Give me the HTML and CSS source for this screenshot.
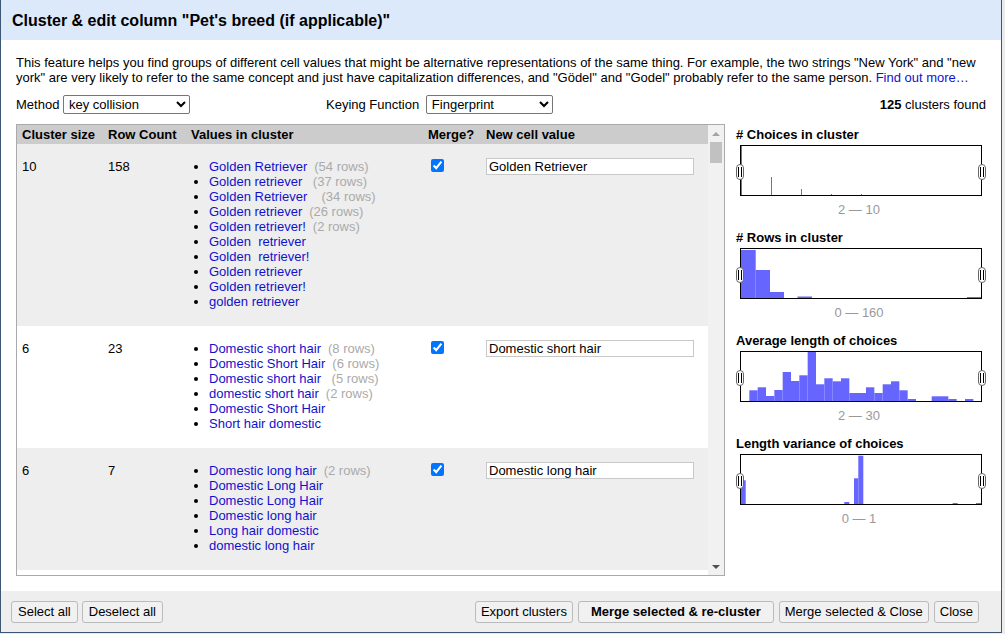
FILE: index.html
```html
<!DOCTYPE html>
<html lang="en">
<head>
<meta charset="utf-8">
<title>Cluster &amp; edit column</title>
<link rel="stylesheet" href="styles.css">
</head>
<body>
<div class="dialog">
  <div class="dlg-header">
    <h1 class="dlg-title">Cluster &amp; edit column "Pet's breed (if applicable)"</h1>
  </div>
  <div class="dlg-body">
    <p class="intro">This feature helps you find groups of different cell values that might be alternative representations of the same thing. For example, the two strings "New York" and "new york" are very likely to refer to the same concept and just have capitalization differences, and "Gödel" and "Godel" probably refer to the same person. <a class="link" href="#">Find out more…</a></p>
    <div class="controls">
      <div class="ctl">Method <select class="sel"><option>key collision</option><option>nearest neighbor</option></select></div>
      <div class="ctl">Keying Function <select class="sel sel-key"><option>Fingerprint</option><option>ngram-fingerprint</option></select></div>
      <div class="ctl count"><b>125</b>&nbsp;clusters found</div>
    </div>
    <div class="main">
      <div class="table-wrap">
        <div class="table-scroll">
          <table class="clusters">
            <colgroup><col class="c1"><col class="c2"><col class="c3"><col class="c4"><col class="c5"></colgroup>
            <thead>
              <tr><th>Cluster size</th><th>Row Count</th><th>Values in cluster</th><th>Merge?</th><th>New cell value</th></tr>
            </thead>
            <tbody>
              <tr class="odd">
                <td>10</td><td>158</td>
                <td><ul class="vals">
                  <li><a class="v" href="#">Golden Retriever</a><span class="rc">(54 rows)</span></li>
                  <li><a class="v" href="#">Golden retriever </a><span class="rc">(37 rows)</span></li>
                  <li><a class="v" href="#">Golden Retriever  </a><span class="rc">(34 rows)</span></li>
                  <li><a class="v" href="#">Golden retriever</a><span class="rc">(26 rows)</span></li>
                  <li><a class="v" href="#">Golden retriever!</a><span class="rc">(2 rows)</span></li>
                  <li><a class="v" href="#">Golden  retriever</a></li>
                  <li><a class="v" href="#">Golden  retriever!</a></li>
                  <li><a class="v" href="#">Golden retriever</a></li>
                  <li><a class="v" href="#">Golden retriever!</a></li>
                  <li><a class="v" href="#">golden retriever</a></li>
                </ul></td>
                <td><input class="cb" type="checkbox" checked></td>
                <td><input class="nv" type="text" value="Golden Retriever"></td>
              </tr>
              <tr class="even">
                <td>6</td><td>23</td>
                <td><ul class="vals">
                  <li><a class="v" href="#">Domestic short hair</a><span class="rc">(8 rows)</span></li>
                  <li><a class="v" href="#">Domestic Short Hair</a><span class="rc">(6 rows)</span></li>
                  <li><a class="v" href="#">Domestic short hair </a><span class="rc">(5 rows)</span></li>
                  <li><a class="v" href="#">domestic short hair</a><span class="rc">(2 rows)</span></li>
                  <li><a class="v" href="#">Domestic Short Hair</a></li>
                  <li><a class="v" href="#">Short hair domestic</a></li>
                </ul></td>
                <td><input class="cb" type="checkbox" checked></td>
                <td><input class="nv" type="text" value="Domestic short hair"></td>
              </tr>
              <tr class="odd">
                <td>6</td><td>7</td>
                <td><ul class="vals">
                  <li><a class="v" href="#">Domestic long hair</a><span class="rc">(2 rows)</span></li>
                  <li><a class="v" href="#">Domestic Long Hair</a></li>
                  <li><a class="v" href="#">Domestic Long Hair</a></li>
                  <li><a class="v" href="#">Domestic long hair</a></li>
                  <li><a class="v" href="#">Long hair domestic</a></li>
                  <li><a class="v" href="#">domestic long hair</a></li>
                </ul></td>
                <td><input class="cb" type="checkbox" checked></td>
                <td><input class="nv" type="text" value="Domestic long hair"></td>
              </tr>
              <tr class="even">
                <td>5</td><td>12</td>
                <td><ul class="vals">
                  <li><a class="v" href="#">Labrador Retriever</a><span class="rc">(6 rows)</span></li>
                  <li><a class="v" href="#">Labrador retriever</a></li>
                </ul></td>
                <td><input class="cb" type="checkbox" checked></td>
                <td><input class="nv" type="text" value="Labrador Retriever"></td>
              </tr>
            </tbody>
          </table>
        </div>
        <div class="vscroll">
          <div class="sb-btn"><span class="arr-up"></span></div>
          <div class="sb-thumb"></div>
          <div class="sb-track"></div>
          <div class="sb-btn"><span class="arr-down"></span></div>
        </div>
      </div>
      <div class="facets">
        <div class="facet">
          <div class="facet-title"># Choices in cluster</div>
          <div class="hist">
            <svg class="bars" width="240" height="49" viewBox="0 0 240 49">
              <rect x="0" y="0" width="1" height="49"/>
              <rect x="30" y="31" width="1" height="18"/>
              <rect x="60" y="43" width="1" height="6"/>
              <rect x="90" y="48" width="1" height="1"/>
              <rect x="120" y="48" width="1" height="1"/>
            </svg>
            <span class="handle left"><span class="grip"></span></span>
            <span class="handle right"><span class="grip"></span></span>
          </div>
          <div class="range">2 — 10</div>
        </div>
        <div class="facet">
          <div class="facet-title"># Rows in cluster</div>
          <div class="hist">
            <svg class="bars" width="240" height="49" viewBox="0 0 240 49">
              <rect x="0" y="1" width="14.7" height="48"/>
              <rect x="14.7" y="21" width="14.3" height="28"/>
              <rect x="29" y="43" width="14" height="6"/>
              <rect x="56.5" y="47.5" width="14.5" height="1.5"/>
              <rect x="226" y="48" width="14" height="1"/>
            </svg>
            <span class="handle left"><span class="grip"></span></span>
            <span class="handle right"><span class="grip"></span></span>
          </div>
          <div class="range">0 — 160</div>
        </div>
        <div class="facet">
          <div class="facet-title">Average length of choices</div>
          <div class="hist">
            <svg class="bars" width="240" height="49" viewBox="0 0 240 49">
              <rect x="8.33" y="38.3" width="8.34" height="10.7"/>
              <rect x="16.67" y="35.3" width="8.33" height="13.7"/>
              <rect x="25" y="44" width="8.33" height="5"/>
              <rect x="33.33" y="38" width="8.34" height="11"/>
              <rect x="41.67" y="20" width="8.33" height="29"/>
              <rect x="50" y="29" width="8.33" height="20"/>
              <rect x="58.33" y="23.3" width="8.34" height="25.7"/>
              <rect x="66.67" y="0" width="8.33" height="49"/>
              <rect x="75" y="32.3" width="8.33" height="16.7"/>
              <rect x="83.33" y="26.3" width="8.34" height="22.7"/>
              <rect x="91.67" y="29.3" width="8.33" height="19.7"/>
              <rect x="100" y="26.3" width="8.33" height="22.7"/>
              <rect x="108.33" y="41" width="16.67" height="8"/>
              <rect x="125" y="35.3" width="8.33" height="13.7"/>
              <rect x="133.33" y="41" width="8.34" height="8"/>
              <rect x="141.67" y="32.3" width="8.33" height="16.7"/>
              <rect x="150" y="29.3" width="8.33" height="19.7"/>
              <rect x="158.33" y="38.3" width="8.34" height="10.7"/>
              <rect x="166.67" y="47" width="8.33" height="2"/>
              <rect x="190.67" y="44.3" width="16.67" height="4.7"/>
              <rect x="207.33" y="47" width="8.34" height="2"/>
              <rect x="224" y="47" width="8.33" height="2"/>
            </svg>
            <span class="handle left"><span class="grip"></span></span>
            <span class="handle right"><span class="grip"></span></span>
          </div>
          <div class="range">2 — 30</div>
        </div>
        <div class="facet">
          <div class="facet-title">Length variance of choices</div>
          <div class="hist">
            <svg class="bars" width="240" height="49" viewBox="0 0 240 49">
              <rect x="0" y="25.3" width="4.7" height="23.7"/>
              <rect x="103.3" y="47" width="5" height="2"/>
              <rect x="113" y="23.3" width="4.3" height="25.7"/>
              <rect x="117.3" y="0.7" width="5" height="48.3"/>
              <rect x="211.7" y="48" width="5" height="1"/>
              <rect x="235" y="48" width="5" height="1"/>
            </svg>
            <span class="handle left"><span class="grip"></span></span>
            <span class="handle right"><span class="grip"></span></span>
          </div>
          <div class="range">0 — 1</div>
        </div>
      </div>
    </div>
  </div>
  <div class="dlg-footer">
    <div class="btn-group">
      <button class="btn wide">Select all</button>
      <button class="btn wide">Deselect all</button>
    </div>
    <div class="btn-group">
      <button class="btn">Export clusters</button>
      <button class="btn primary">Merge selected &amp; re-cluster</button>
      <button class="btn">Merge selected &amp; Close</button>
      <button class="btn">Close</button>
    </div>
  </div>
</div>
</body>
</html>
```
FILE: styles.css
```css
html, body {
  margin: 0;
  padding: 0;
}
body {
  background: #ececec;
  font-family: "Liberation Sans", Arial, sans-serif;
  font-size: 13px;
  color: #000;
  width: 1005px;
  height: 634px;
  overflow: hidden;
}
.dialog {
  box-sizing: border-box;
  width: 1002px;
  height: 633px;
  border: 1px solid #3c5674;
  border-top: none;
  background: #fff;
  display: flex;
  flex-direction: column;
}
.dlg-header {
  height: 40px;
  background: #dce9fb;
  display: flex;
  align-items: center;
  padding-left: 11px;
  flex: none;
}
.dlg-title {
  margin: 0;
  font-size: 16px;
  font-weight: bold;
  line-height: 20px;
  padding-top: 1px;
}
.dlg-body {
  flex: 1;
  padding: 15px 15px 15px 15px;
  display: flex;
  flex-direction: column;
}
.intro {
  margin: 0;
  line-height: 15px;
  width: 970px;
}
.link {
  color: #11c;
  text-decoration: none;
}
.controls {
  margin-top: 10px;
  height: 19px;
  display: grid;
  grid-template-columns: 310px 1fr auto;
  align-items: center;
}
.ctl {
  display: flex;
  align-items: center;
  white-space: pre;
}
.sel {
  margin-left: 0;
  width: 127px;
  height: 19px;
  font-family: "Liberation Sans", Arial, sans-serif;
  font-size: 13px;
  padding: 0 1px;
  border: 1px solid #767676;
  border-radius: 2px;
  background: #fff;
  color: #000;
}
.sel-key {
  margin-left: 3px;
}
.main {
  margin-top: 10px;
  display: flex;
  align-items: flex-start;
}
.table-wrap {
  box-sizing: border-box;
  width: 709px;
  height: 452px;
  border: 1px solid #aaa;
  display: flex;
  flex: none;
}
.table-scroll {
  width: 691px;
  height: 450px;
  overflow: hidden;
}
.clusters {
  width: 691px;
  table-layout: fixed;
  border-collapse: collapse;
  line-height: 15px;
}
.c1 { width: 86px; }
.c2 { width: 83px; }
.c3 { width: 237px; }
.c4 { width: 58px; }
.c5 { width: 227px; }
.clusters th {
  background: #ccc;
  height: 19px;
  padding: 0 5px;
  text-align: left;
  font-weight: bold;
  white-space: nowrap;
}
.clusters td {
  vertical-align: top;
  padding: 15px 5px 17px 5px;
}
.odd { background: #eee; }
.even { background: #fff; }
.vals {
  margin: 0;
  padding-left: 18px;
}
.vals li {
  white-space: nowrap;
}
.v {
  color: #11c;
  text-decoration: none;
  white-space: pre;
}
.rc {
  color: #aaa;
  margin-left: 7px;
}
.cb {
  margin: 0 0 0 3px;
  width: 13px;
  height: 13px;
  display: block;
}
.nv {
  box-sizing: border-box;
  display: block;
  margin-top: -1px;
  width: 208px;
  height: 17px;
  padding: 0 2px;
  border: 1px solid #c8c8c8;
  font-family: "Liberation Sans", Arial, sans-serif;
  font-size: 13px;
  color: #000;
  background: #fff;
}
.vscroll {
  width: 16px;
  height: 450px;
  background: #f1f1f1;
  display: flex;
  flex-direction: column;
  align-items: center;
}
.sb-btn {
  height: 17px;
  width: 16px;
  display: flex;
  align-items: center;
  justify-content: center;
  flex: none;
}
.arr-up {
  width: 0;
  height: 0;
  border-left: 4px solid transparent;
  border-right: 4px solid transparent;
  border-bottom: 4px solid #a3a3a3;
}
.arr-down {
  width: 0;
  height: 0;
  border-left: 4px solid transparent;
  border-right: 4px solid transparent;
  border-top: 4px solid #505050;
}
.sb-thumb {
  width: 12px;
  height: 21px;
  background: #c1c1c1;
  flex: none;
}
.sb-track {
  flex: 1;
}
.facets {
  margin-left: 11px;
  padding-top: 3px;
  flex: 1;
}
.facet {
  margin-bottom: 13px;
}
.facet-title {
  font-weight: bold;
  line-height: 15px;
}
.hist {
  position: relative;
  box-sizing: border-box;
  margin: 3px 0 0 4px;
  width: 242px;
  height: 51px;
  border: 1px solid #000;
  background: #fff;
}
.bars {
  display: block;
  fill: #6666ff;
}
.handle {
  position: absolute;
  top: 18px;
  box-sizing: border-box;
  width: 8px;
  height: 16px;
  border: 1px solid #666;
  border-radius: 4px;
  background: #fff;
  display: flex;
  align-items: center;
  justify-content: center;
}
.handle.left { left: -5px; }
.handle.right { right: -5px; }
.grip {
  box-sizing: border-box;
  width: 4px;
  height: 10px;
  border-left: 1px solid #000;
  border-right: 1px solid #000;
}
.range {
  margin-top: 6px;
  width: 246px;
  text-align: center;
  color: #999;
  line-height: 15px;
}
.dlg-footer {
  flex: none;
  height: 41px;
  box-sizing: border-box;
  background: #eee;
  padding: 10px 22px 0 10px;
  display: flex;
  justify-content: space-between;
  align-items: flex-start;
}
.btn-group {
  display: flex;
  gap: 4px;
}
.btn-group + .btn-group {
  gap: 5px;
}
.btn {
  height: 22px;
  padding: 0 5px;
  font-family: "Liberation Sans", Arial, sans-serif;
  font-size: 13px;
  color: #000;
  background: #f1f1f1;
  border: 1px solid #bbb;
  border-radius: 3px;
  line-height: 20px;
}
.btn.wide {
  padding: 0 6px;
}
.btn.primary {
  font-weight: bold;
  padding: 0 12px;
}
```
